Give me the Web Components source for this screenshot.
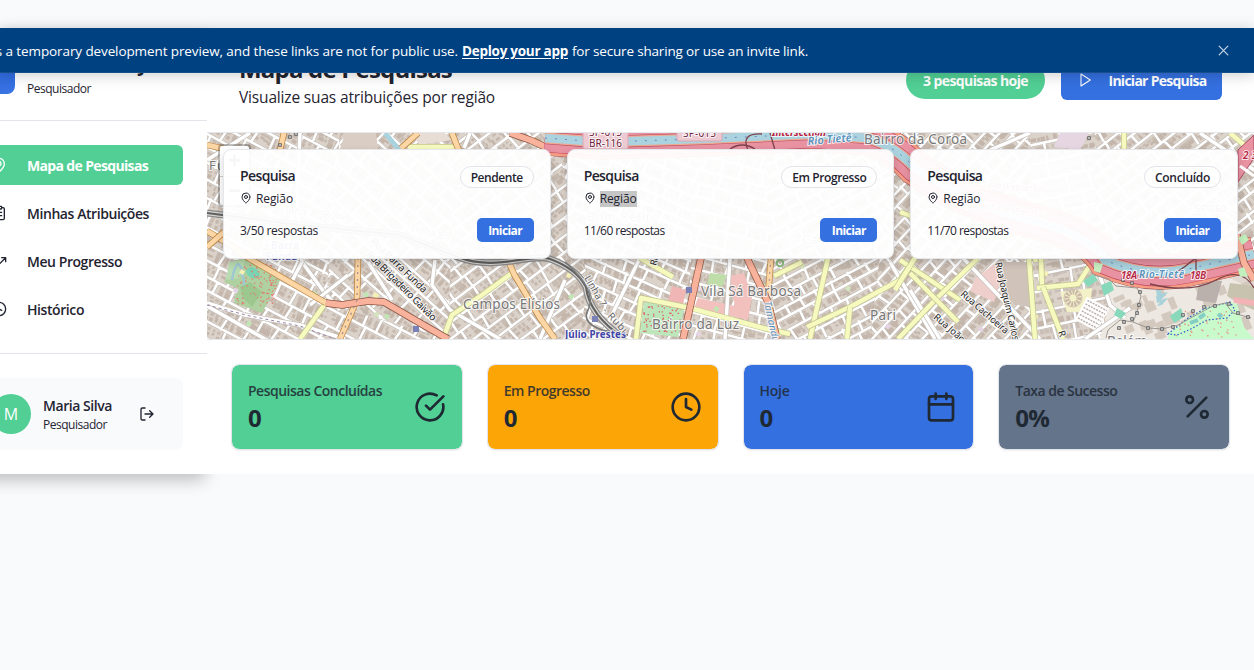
<!DOCTYPE html>
<html lang="pt-BR">
<head>
<meta charset="utf-8">
<title>Mapa de Pesquisas</title>
<style>
html,body{margin:0;height:100%;overflow:hidden;background:#f8fafc;color:#1f2430;font-family:"Open Sans","Noto Sans",sans-serif}
</style>
</head>
<body>
<survey-app></survey-app>
<script>
const define=(name,html,setup)=>customElements.define(name,class extends HTMLElement{
  connectedCallback(){
    if(this.shadowRoot)return;
    const t=document.createElement('template');
    t.innerHTML=html;
    this.attachShadow({mode:'open'}).append(t.content.cloneNode(true));
    if(setup)setup(this,this.shadowRoot);
  }
});

/* one line of text, tracked to fill the width given in "w" */
define('fit-text',`<style>:host{display:inline-block;white-space:nowrap}:host([underline]){text-decoration:underline;text-underline-offset:2px}span{white-space:pre}</style><span><slot></slot></span>`,(el,root)=>{
  const w=+el.getAttribute('w'),s=root.querySelector('span'),n=el.textContent.length;
  if(!w)return;
  const nat=s.getBoundingClientRect().width;
  s.style.letterSpacing=((w-nat)/n).toFixed(3)+'px';
  el.style.width=w+'px';
});

const icons={
  pin:'<path d="M20 10c0 4.99-5.54 10.19-7.4 11.8a1 1 0 0 1-1.2 0C9.54 20.19 4 14.99 4 10a8 8 0 0 1 16 0"/><circle cx="12" cy="10" r="3"/>',
  clipboard:'<rect x="8" y="2" width="8" height="4" rx="1"/><path d="M16 4h2a2 2 0 0 1 2 2v14a2 2 0 0 1-2 2H6a2 2 0 0 1-2-2V6a2 2 0 0 1 2-2h2M12 11h4M12 16h4M8 11h.01M8 16h.01"/>',
  trend:'<path d="M22 7l-8.500 8.500-5-5L2 17M16 7h6v6"/>',
  history:'<circle cx="12" cy="12" r="10"/><path d="M12 6v6l4 2"/>',
  clock:'<circle cx="12" cy="12" r="10"/><path d="M12 6v6l4 2"/>',
  check:'<path d="M21.800 10A10 10 0 1 1 17 3.340M9 11l3 3L22 4"/>',
  calendar:'<path d="M8 2v4M16 2v4M3 10h18"/><rect x="3" y="4" width="18" height="18" rx="2"/>',
  percent:'<path d="M19 5L5 19"/><circle cx="6.500" cy="6.500" r="2.500"/><circle cx="17.500" cy="17.500" r="2.500"/>',
  logout:'<path d="M9 21H5a2 2 0 0 1-2-2V5a2 2 0 0 1 2-2h4M16 17l5-5-5-5M21 12H9"/>',
  play:'<path d="M6 3l14 9-14 9z"/>',
  close:'<path d="M4 4l16 16M20 4L4 20"/>'
};
define('ui-icon',`<style>:host{display:block;flex:none}svg{display:block;fill:none;stroke:currentColor;stroke-linecap:round;stroke-linejoin:round}</style><div></div>`,(el,root)=>{
  const s=el.getAttribute('size')||16,k=el.getAttribute('stroke')||2;
  root.querySelector('div').innerHTML=`<svg width="${s}" height="${s}" viewBox="0 0 24 24" stroke-width="${k}">${icons[el.getAttribute('name')]}</svg>`;
});

define('preview-banner',`<style>
:host{position:absolute;left:0;right:0;top:28px;height:45px;box-sizing:border-box;background:#004182;border-bottom:1px solid #174f8d;box-shadow:0 2px 14px rgba(0,0,0,.2);color:#fff;display:flex;align-items:center;font-size:13.500px;z-index:5;padding-right:24px}
p{margin:0 auto 0 -36px;display:flex;gap:4px;font-weight:500;padding-top:2px}
b{font-weight:700}
ui-icon{color:#c2d3e4}
</style><p><fit-text w="494">This is a temporary development preview, and these links are not for public use.</fit-text><b><fit-text underline w="106">Deploy your app</fit-text></b><fit-text w="236">for secure sharing or use an invite link.</fit-text></p><ui-icon name="close" size="13" stroke="2.300"></ui-icon>`);

define('nav-item',`<style>
:host{display:flex;align-items:center;height:40px;border-radius:6px;gap:20px;padding-left:16px;font-size:14px;font-weight:600}
:host([active]){background:#51cf94;color:#fff;font-weight:700}
</style><ui-icon size="16"></ui-icon><slot></slot>`,(el,root)=>{
  const i=root.querySelector('ui-icon'),n=document.createElement('ui-icon');
  n.setAttribute('name',el.getAttribute('icon'));n.setAttribute('size','16');i.replaceWith(n);
});

define('side-bar',`<style>
:host{display:flex;flex-direction:column;flex:none;width:256px;margin-left:-49px;background:#fff;box-shadow:0 8px 16px -2px rgba(0,0,0,.24);height:446px;position:relative;z-index:0}
header{height:93px;box-sizing:border-box;border-bottom:1px solid #e2e5ea;padding:26px 24px 26px;display:flex;gap:12px}
.logo{width:40px;height:40px;border-radius:8px;background:linear-gradient(160deg,#2460d8,#3a74e4);color:#fff;font:700 20px "Liberation Serif",serif;display:grid;place-items:center}
.brand{display:flex;flex-direction:column;font-weight:700;font-size:20px;line-height:25px;margin-top:-3px}
.brand small{margin-top:5px}
small{font-size:12px;font-weight:400;line-height:16px;display:block}
nav{padding:24px 24px 0;display:flex;flex-direction:column;gap:8px;height:233px;box-sizing:border-box;border-bottom:1px solid #e2e5ea}
.user{margin:24px 24px 0;height:72px;background:#f8fafc;border-radius:8px;display:flex;align-items:center;box-sizing:border-box;padding:0 28px 0 16px;gap:12px}
.av{width:40px;height:40px;flex:none;border-radius:50%;background:#51cf94;color:#fff;display:grid;place-items:center;font-size:16px}
.name{flex:1;font-size:14px;line-height:20px;font-weight:600}
.name small{line-height:17px}
</style>
<header><div class="logo">I</div><div class="brand"><fit-text w="123">InfoSurvey</fit-text><small><fit-text w="64">Pesquisador</fit-text></small></div></header>
<nav><nav-item icon="pin" active><fit-text w="121">Mapa de Pesquisas</fit-text></nav-item><nav-item icon="clipboard"><fit-text w="122">Minhas Atribuições</fit-text></nav-item><nav-item icon="trend"><fit-text w="95">Meu Progresso</fit-text></nav-item><nav-item icon="history"><fit-text w="57">Histórico</fit-text></nav-item></nav>
<div class="user"><div class="av">M</div><div class="name"><fit-text w="69">Maria Silva</fit-text><small><fit-text w="64">Pesquisador</fit-text></small></div><ui-icon name="logout" size="16"></ui-icon></div>`);

define('page-header',`<style>
:host{display:flex;height:104px;box-sizing:border-box;padding:32px 32px 0;align-items:flex-start;background:#fff}
.t{flex:1;margin-top:-9px}
h1{font-size:24px;line-height:36px;margin:0;font-weight:700}
p{font-size:15.500px;line-height:24px;margin:-2px 0 0}
.badge,.btn{box-sizing:border-box;color:#fff;font-weight:700;font-size:14px;display:flex;align-items:center;justify-content:center}
.badge{width:139px;height:38px;border-radius:19px;background:#51cf94;margin:1px 16px 0 0}
.btn{width:161px;height:40px;border-radius:6px;background:#3470e0;gap:16px}
</style><div class="t"><h1><fit-text w="213">Mapa de Pesquisas</fit-text></h1><p><fit-text w="256">Visualize suas atribuições por região</fit-text></p></div><div class="badge"><fit-text w="105">3 pesquisas hoje</fit-text></div><div class="btn"><ui-icon name="play" size="16" stroke="1.600"></ui-icon><fit-text w="98">Iniciar Pesquisa</fit-text></div>`);

define('survey-card',`<style>
:host{display:flex;flex-direction:column;box-sizing:border-box;height:110px;padding:16px;background:rgba(255,255,255,.95);border:1px solid #e5e7eb;border-radius:8px;box-shadow:0 4px 8px rgba(0,0,0,.16);font-size:12px}
.r{display:flex;justify-content:space-between;align-items:flex-start}
.ti{font-size:14px;font-weight:600;line-height:20px}
.re{display:flex;align-items:center;gap:4px;line-height:16px;margin-top:5px}
.re ui-icon{margin-top:-2px}
.pill{border:1px solid #e2e4ea;border-radius:11px;height:22px;box-sizing:border-box;padding:0 10px;line-height:21px;font-weight:600;font-size:12px;background:rgba(255,255,255,.5)}
.b{margin-top:11px;align-items:center}
.btn{width:57px;height:24px;border-radius:5px;background:#3470e0;color:#fff;font-weight:700;display:grid;place-items:center;padding-top:1px;box-sizing:border-box}
:host([selected]) .re fit-text{background:#c6c6c6}
</style><div class="r"><div><div class="ti"><fit-text w="55">Pesquisa</fit-text></div><div class="re"><ui-icon name="pin" size="12" stroke="2"></ui-icon><fit-text w="37">Região</fit-text></div></div><div class="pill"><slot name="status"></slot></div></div>
<div class="r b"><slot name="count"></slot><div class="btn"><fit-text w="34">Iniciar</fit-text></div></div>`);

/* street map, drawn in window coordinates */
function drawMap(){
  let seed=7;const R=()=>(seed=(seed*16807)%2147483647)/2147483647,f=n=>n.toFixed(1);
  let o='<rect x="207" y="133" width="1047" height="206" fill="#e0d8d0"/>';
  const D=[
   ['207,133 340,133 330,305 448,339 207,339',28,14,21,'#c8bbb1'],
   ['340,133 460,133 470,270 448,339 326,303',42,14,23,'#c7b9ae'],
   ['455,133 600,133 590,339 448,339',-37,14,22,'#c8bcb2'],
   ['555,133 700,133 686,339 580,339 588,280',24,12,20,'#c3b6ac'],
   ['700,133 770,133 775,339 686,339',15,14,22,'#cbbfb5'],
   ['765,133 900,133 890,339 775,339',-28,12,20,'#c8bcb2'],
   ['895,133 1035,133 1035,339 870,339',-47,12,21,'#c6b9ae'],
   ['1030,133 1100,133 1110,339 1035,339',-12,18,30,'#cabfb7'],
   ['1095,133 1254,133 1254,265 1095,265',-38,12,20,'#cabfb5']];
  D.forEach((d,i)=>{
    const P=d[0].split(' ').map(p=>p.split(',').map(Number)),xs=P.map(p=>p[0]),ys=P.map(p=>p[1]);
    const cx=(Math.min(...xs)+Math.max(...xs))/2,cy=236,L=(Math.max(...xs)-Math.min(...xs))/2+110;
    o+=`<clipPath id="d${i}"><polygon points="${d[0]}"/></clipPath><g clip-path="url(#d${i})"><g transform="translate(${cx} ${cy}) rotate(${d[1]})">`;
    let b='',b2='',w='';
    for(let y=-L;y<L;y+=d[2]){
      const oy=R()*3-1.500;
      w+=`M${f(-L)} ${f(y+oy)}L${f(L)} ${f(y+oy+R()*6-3)}`;
      for(let x=-L+R()*12;x<L;x+=d[3]*(.7+R()*.6)){
        w+=`M${f(x)} ${f(y)}L${f(x+R()*4-2)} ${f(y+d[2])}`;
      }
      for(let x=-L;x<L;x+=4+R()*3){
        const h=2+R()*4,ww=2+R()*4;
        b+=`M${f(x)} ${f(y+2)}h${f(ww)}v${f(h)}h-${f(ww)}z`;
        b2+=`M${f(x+R()*2)} ${f(y+d[2]-6-R()*3)}h${f(ww)}v${f(h)}h-${f(ww)}z`;
      }
    }
    o+=`<rect x="${-L}" y="${-L}" width="${2*L}" height="${2*L}" fill="#dbd2ca"/><path d="${b}" fill="${d[4]}"/><path d="${b2}" fill="#c4b6ab"/><path d="${w}" stroke="#bfb8b2" stroke-width="3.500" fill="none"/><path d="${w}" stroke="#fff" stroke-width="2.500" fill="none"/></g></g>`;
  });
  const area=(p,c)=>{o+=`<polygon points="${p}" fill="${c}"/>`};
  const road=(p,c,w,k,kw=1.400)=>{o+=`<polyline points="${p}" fill="none" stroke="${k}" stroke-width="${w+kw}" stroke-linejoin="round"/><polyline points="${p}" fill="none" stroke="${c}" stroke-width="${w}" stroke-linejoin="round"/>`};
  const OR=(p,w=5)=>road(p,'#fcd6a4',w,'#b98342'),YE=(p,w=4.500)=>road(p,'#f7fabf',w,'#c2c58d'),SA=(p,w=6)=>road(p,'#f9b29c',w,'#8a5440'),WH=(p,w=3.500)=>road(p,'#fff',w,'#c5bfba');
  const dots=(x,y,w,h,n,c)=>{let s='';for(let i=0;i<n;i++)s+=`M${f(x+R()*w)} ${f(y+R()*h)}h1.300v1.300h-1.300z`;o+=`<path d="${s}" fill="${c}"/>`};
  // parks and large lots
  area('235,260 247,259 281,279 262,313 234,303 237,288 224,282','#afd0a0');
  area('229,262 245,260 240,278 226,280','#b9dcb2');
  o+='<path d="M232 280q2-13 6-16q6 5 3 9q5 7 2 14" fill="none" stroke="#a0c8d2" stroke-width="2.500"/><ellipse cx="253" cy="273" rx="7" ry="5" transform="rotate(25 253 273)" fill="#79d4b4"/>';
  area('240,287 250,282 262,292 252,307 243,298','#9cc88f');
  dots(236,264,40,42,95,'#e37b6f');
  area('345,133 376,133 378,149 340,149','#dacdc3');area('410,133 445,133 452,140 420,145','#e7ddd5');
  area('550,137 562,134 566,150 552,150','#c1ecbf');dots(551,135,14,13,12,'#4262d4');
  area('644,302 684,309 678,337 640,333','#bde6bb');dots(643,305,38,27,70,'#df5d64');
  area('672,286 686,290 683,305 668,301','#f0b6b5');area('710,273 727,275 722,287 707,284','#bfdda8');
  area('728,276 744,273 752,296 748,320 694,308 698,298 735,306','#f2c1be');
  area('640,133 665,133 655,150 642,150','#e3d3dd');
  area('975,279 994,264 1003,271 994,302 970,291','#efcfcb');
  area('1000,262 1029,262 1029,307 1000,302','#cfc3ba');area('1060,133 1089,133 1080,150 1054,147','#e5d6e1');
  area('1092,270 1143,285 1230,278 1254,290 1254,339 1100,339 1110,301','#eee8e2');
  for(let i=0;i<38;i++){const x=1112+R()*130,y=283+R()*54,w=4+R()*9,h=4+R()*10;o+=`<rect x="${f(x)}" y="${f(y)}" width="${f(w)}" height="${f(h)}" transform="rotate(-22 ${f(x)} ${f(y)})" fill="#d4c9be"/>`}
  area('1060,292 1092,288 1090,312 1067,312','#f3f1c8');
  o+='<circle cx="1073" cy="298" r="6" fill="none" stroke="#c9b8a7" stroke-width="5" stroke-dasharray="2 1"/><circle cx="1073" cy="298" r="9" fill="none" stroke="#d0c3b5"/>';
  o+='<g transform="rotate(28 1092 313)"><rect x="1080" y="301" width="25" height="26" fill="#fff"/><path d="M1082 304h22M1082 308h22M1082 312h22M1082 316h22M1082 320h22M1082 324h22" stroke="#bab0aa" stroke-width="1.500" stroke-dasharray="2 1"/></g>';
  for(let i=0;i<4;i++)area(`${1156+i%2*7},${290+i*3} ${1161+i%2*7},${289+i*3} 1162,${296+i*3} 1157,${297+i*3}`,'#a9d1da');
  area('1200,278 1222,281 1216,303 1196,300','#bab1ac');
  area('1230,283 1254,286 1254,310 1240,304 1227,296','#c8c3ae');area('1233,297 1254,300 1254,306 1234,303','#f1b3b5');
  area('1168,333 1188,318 1206,307 1230,302 1237,304 1244,327 1254,339 1168,339','#c8facc');
  o+='<path d="M1168 334l20-16l18-10l24-6l5 8l-8 8l-20 2l-18 10l-12 5z" fill="none" stroke="#2d58c8" stroke-width="1.200" stroke-dasharray="1.500 2"/>';
  dots(1172,310,64,27,42,'#e79284');
  o+='<path d="M1190 323l8-3M1199 318l6-4M1218 314l4 3" stroke="#84cfc4" stroke-width="4"/>';
  // minor highlights
  for(let i=0;i<28;i++){const x=220+R()*850,y=260+R()*74;area(`${f(x)},${f(y)} ${f(x+4)},${f(y+2)} ${f(x+2)},${f(y+6)} ${f(x-2)},${f(y+4)}`,['#f4f0b6','#c0e6b4','#e5d5e4','#d4e4bc'][i%4])}
  // white avenues
  ['300,133 297,200 302,262 324,292 340,310','207,303 245,315 300,325 345,339','207,306 265,339','368,262 392,300','302,262 290,285','435,260 432,285 450,310 500,339','348,275 310,305','470,133 464,148','640,258 600,339','565,280 540,339','730,258 725,339','890,262 935,339','940,339 910,290','960,255 1040,339','1092,255 1105,290 1110,305 1125,318','1085,339 1130,308','830,133 820,150','990,150 1030,133','1200,133 1240,160 1254,170','207,160 250,133'].forEach(p=>WH(p));
  for(const p of ['1083,281 1093,274 1098,280 1088,287','1101,285 1111,281 1114,290 1104,296','1117,308 1126,313 1121,319 1114,315','1170,316 1181,308 1184,317 1174,323','1145,256 1164,256 1170,263 1149,263'])area(p,'#88d9bc');
  o+='<polyline points="207,305 250,316 300,326 335,339" fill="none" stroke="#9a86a7" stroke-width="1" stroke-dasharray="3 3"/>';
  // avenues
  ['325,304 300,339','512,273 482,295 452,315 443,339','636,339 641,298 690,308 763,328 790,334','828,258 810,339','673,277 640,258','774,276 802,262','807,327 850,307 900,280 915,258','850,307 847,339','960,300 900,260','895,290 915,258','898,339 935,300 978,258','910,273 958,322','1029,258 1035,339','1041,258 1042,286','1037,288 1078,284 1092,262','1043,287 1063,339','408,147 458,147','1035,258 1036,262','1124,133 1124,150','1230,133 1250,150','900,212 911,216'].forEach(p=>YE(p));
  ['207,231 224,241 250,259 326,303','207,247 224,232','284,133 280,150','358,258 357,300 340,339','398,151 418,133','452,133 459,151','507,258 514,274 540,318 555,339','771,258 768,296','533,140 548,150','207,145 225,149'].forEach(p=>OR(p));
  SA('326,303 342,305 368,301 384,302 420,323 448,339',6);
  SA('701,258 683,339',6);SA('747,258 768,302 777,339',6);SA('715,133 714,150',5);SA('510,133 530,140 552,150',6);
  o+='<polyline points="358,258 357,300 340,339" fill="none" stroke="#a98d91" stroke-width="1.300" stroke-dasharray="2 5"/><polyline points="771,258 768,296" fill="none" stroke="#a98d91" stroke-dasharray="2 5"/>';
  o+='<path d="M385 133l14 17" stroke="#aad3df" stroke-width="5"/>';
  // river with expressways on both banks
  const rv='M545 138L600 142L700 139L810 134L868 138Q895 146 915 168Q970 205 1030 220T1105 260Q1145 278 1188 269L1254 254';
  [['#8a4550',49],['#f69d83',48],['#c54d63',40],['#e892a2',38],['#b34b62',17],['#f2a78f',15.500],['#aad3df',12]].forEach(([c,w])=>{o+=`<path d="${rv}" fill="none" stroke="${c}" stroke-width="${w*.72}"/>`});
  o+=`<path d="${rv}" fill="none" stroke="#7186bf" stroke-width="1" stroke-dasharray="2 8"/>`;
  o+='<path d="M770 133l5 17M748 150q-8-17 14-16M1173 275q12-8 24-18M1196 255v20M1150 284q40 10 66-4t38 8M730 149q12-8 25 0" fill="none" stroke="#7c4149" stroke-width="1.300"/>';
  SA('1237,235 1244,263 1254,280',6);area('1238,238 1245,234 1249,240 1242,245','#c1efbd');area('1238,269 1244,267 1248,276 1240,277','#c1efbd');area('1094,262 1103,264 1100,273 1094,271','#c8f0c2');
  o+='<path d="M1254 158L1238 182V150L1254 135z" fill="#e892a2" stroke="#ab4b5f"/><path d="M1240 166l14 10" stroke="#fff" stroke-width="3"/>';
  // railway
  const rail='M207 213L300 225L400 235L458 257Q480 266 512 261T550 259Q577 269 586 287Q589 315 625 339';
  o+=`<path d="${rail}" fill="none" stroke="#8b8b8b" stroke-width="7"/><path d="${rail}" fill="none" stroke="#d9d6d2" stroke-width="4.500"/><path d="${rail}" fill="none" stroke="#606060" stroke-width="2.200"/><path d="M565 262Q598 291 588 310T628 335" fill="none" stroke="#777" stroke-width="1.500"/>`;
  o+='<path d="M1094 275l15 4l7 7l21 2l4 8l-4 16l-4 10l-13-2l-12 10l-2 8M1133 322l15 6l14 1l16-4l20-11l15-8l12-3l8 10l18 5" fill="none" stroke="#9c9791"/>';
  for(const [x,y] of [[1123,280],[1132,283],[1140,292],[1139,305],[1137,313],[1132,319],[1124,322],[1119,328],[1148,328],[1162,329],[1173,327],[1183,315],[1193,311],[1204,307],[1215,306],[1229,304],[1238,313],[1248,317],[280,145],[290,137],[296,134],[799,155],[1089,138]])o+=`<rect x="${x-1.300}" y="${y-1.300}" width="2.600" height="2.600" fill="#ccc" stroke="#555" stroke-width=".8"/>`;
  for(const [x,y] of [[416,329],[595,319],[689,290]])o+=`<rect x="${x-3}" y="${y-3}" width="6" height="6" fill="#7981b7"/>`;
  o+='<circle cx="780" cy="263" r="3.200" fill="none" stroke="#8dba81" stroke-width="2"/>';
  // labels
  const T=(t,x,y,s,c,w,e='')=>{o+=`<text x="${x}" y="${y}" font-size="${s}" fill="${c}" textLength="${w}" stroke="#fff" stroke-opacity=".8" stroke-width="2" paint-order="stroke" ${e}>${t}</text>`};
  o+='<rect x="583" y="129" width="45" height="20" rx="2" fill="#edc9d2" stroke="#dda5b4"/><rect x="677" y="123" width="45" height="18" rx="2" fill="#edc9d2" stroke="#dda5b4"/>';
  T('SP-015',589,136,10,'#6c2039',33);T('BR-116',589,147,10,'#6c2039',33);T('SP-015',683,137,10,'#6c2039',33);
  T('Intersection',772,136,10,'#b52340',54,'font-style="italic" font-weight="700"');
  T('Rio Tietê',808,145,11,'#5792bd',44,'font-style="italic" font-weight="600" transform="rotate(-5 808 145)"');
  T('Bairro da Coroa',864,144,13.500,'#777',103);T('Campos Elísios',463,309,13.500,'#777',97);T('Vila Sá Barbosa',701,296,13.500,'#777',100);T('Bairro da Luz',652,329,13.500,'#777',87);T('Pari',870,320,13.500,'#777',26);T('Belém',1107,346,13.500,'#777',40);T('Fu',209,170,13,'#777',16);
  T('Júlio Prestes',565,338,10,'#4045a8',61,'font-weight="700"');
  T('- Barra',265,249,10,'#4045a8',34,'font-weight="600"');T('Funda',266,260,10,'#4045a8',31,'font-weight="600"');
  T('Rua Barra Funda',370,242,10,'#222',74,'transform="rotate(44 370 242)"');
  T('Rua Brigadeiro Galvão',366,255,10,'#222',94,'transform="rotate(45 366 255)"');
  T('Linha 7',584,278,10,'#666',34,'transform="rotate(60 584 278)"');T('- Rubi',602,311,10,'#666',31,'transform="rotate(47 602 311)"');
  T('Linha 7 - Rubi',280,213,10,'#666',65,'transform="rotate(6 280 213)"');T('Linha 8 - Diamante',410,230,10,'#666',88,'transform="rotate(17 410 230)"');
  T('Rua Prates',656,266,9,'#222',44,'transform="rotate(-75 656 266)"');
  T('Tamanduateí',764,302,10,'#5792bd',58,'font-style="italic" transform="rotate(78 764 302)"');
  T('Bom Retiro',587,221,12.500,'#777',72);T('Canindé',802,244,12.500,'#777',50);
  T('Marginal Tietê (Expressa)',943,185,9.500,'#a33d54',102,'transform="rotate(4 943 185)"');T('Marginal Tietê (Central)',950,205,9.500,'#a33d54',98,'transform="rotate(8 950 205)"');
  T('SP-060',1195,212,9,'#6c2039',31);
  T('Rua Joaquim Carlos',995,263,9.500,'#222',80,'transform="rotate(77 995 263)"');T('Rua Cachoeira',960,295,9.500,'#222',60,'transform="rotate(41 960 295)"');T('Rua João',933,318,9.500,'#222',38,'transform="rotate(41 933 318)"');T('Ru',1058,332,9.500,'#222',15,'transform="rotate(70 1058 332)"');
  T('18A',1121,279,10,'#b52340',16,'font-style="italic" font-weight="600"');T('18B',1190,279,10,'#b52340',16,'font-style="italic" font-weight="600"');T('Rio-Tietê',1139,278,10,'#5792bd',45,'font-style="italic" font-weight="600"');
  T('23',1243,159,10,'#b52340',14,'font-style="italic" font-weight="600"');
  return o;
}
define('street-map',`<style>
:host{display:block;position:relative;height:208px;box-sizing:border-box;border:1px solid #e5e7eb;border-width:1px 0}
svg{display:block;font-family:"Noto Sans","Open Sans",sans-serif}
.zoom{position:absolute;left:11px;top:11px;width:33px;height:63px;border:2px solid rgba(0,0,0,.25);background:#fff;background-clip:padding-box;border-radius:4px;box-sizing:border-box;display:grid;grid-template-rows:1fr 1fr}
.zoom i{display:grid;place-items:center;font:bold 22px/1 "Liberation Sans",sans-serif;color:#555}
.zoom i+i{border-top:1px solid #ccc}
.cards{position:absolute;left:16px;right:16px;top:16px;display:grid;grid-template-columns:repeat(3,1fr);gap:16px}
</style><div class="m"></div><div class="zoom"><i>+</i><i>−</i></div>
<div class="cards">
<survey-card><fit-text slot="status" w="52">Pendente</fit-text><fit-text slot="count" w="78">3/50 respostas</fit-text></survey-card>
<survey-card selected><fit-text slot="status" w="74">Em Progresso</fit-text><fit-text slot="count" w="81">11/60 respostas</fit-text></survey-card>
<survey-card><fit-text slot="status" w="55">Concluído</fit-text><fit-text slot="count" w="81">11/70 respostas</fit-text></survey-card>
</div>`,(el,root)=>{root.querySelector('.m').innerHTML=`<svg width="1047" height="206" viewBox="207 133 1047 206">${drawMap()}</svg>`});

define('stat-card',`<style>
:host{display:flex;justify-content:space-between;align-items:center;box-sizing:border-box;height:86px;padding:16px;background-clip:padding-box!important;border:1px solid #e2e6ec;border-radius:8px;box-shadow:0 1px 2px rgba(0,0,0,.06);color:#1f2933}
.l{font-size:14px;font-weight:600;line-height:20px;opacity:.85}.v{font-size:24px;font-weight:700;line-height:32px;margin-top:1px}
.l,.v{display:block}
</style><div><div class="l"><slot></slot></div><div class="v"><slot name="value"></slot></div></div><span></span>`,(el,root)=>{
  el.style.backgroundColor=el.getAttribute('color');
  root.querySelector('span').innerHTML=`<ui-icon name="${el.getAttribute('icon')}" size="32"></ui-icon>`;
});

define('survey-app',`<style>
:host{display:flex;position:relative;height:446px;padding-top:28px;overflow:visible}
main{flex:1;min-width:0;background:#fff;height:446px;position:relative;z-index:1}
.stats{display:grid;grid-template-columns:repeat(4,1fr);gap:24px;padding:24px}
</style><preview-banner></preview-banner><side-bar></side-bar><main><page-header></page-header><street-map></street-map>
<div class="stats">
<stat-card color="#51cf94" icon="check"><fit-text w="134">Pesquisas Concluídas</fit-text><fit-text slot="value" w="14">0</fit-text></stat-card>
<stat-card color="#fca507" icon="clock"><fit-text w="86">Em Progresso</fit-text><fit-text slot="value" w="14">0</fit-text></stat-card>
<stat-card color="#3470e0" icon="calendar"><fit-text w="30">Hoje</fit-text><fit-text slot="value" w="14">0</fit-text></stat-card>
<stat-card color="#64748b" icon="percent"><fit-text w="102">Taxa de Sucesso</fit-text><fit-text slot="value" w="34">0%</fit-text></stat-card>
</div></main>`);
</script>
</body>
</html>
